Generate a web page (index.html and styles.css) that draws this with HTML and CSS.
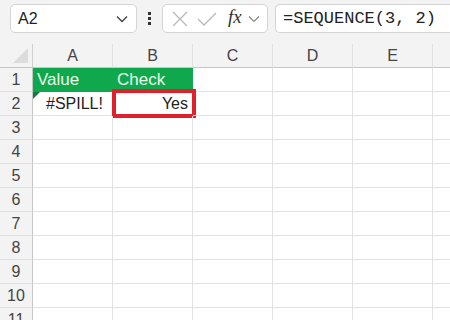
FILE: index.html
```html
<!DOCTYPE html>
<html lang="en">
<head>
    <meta charset="UTF-8">
    <title>Sheet</title>
    <link rel="stylesheet" href="styles.css">
</head>
<body>
    <div class="toolbar">
        <div class="namebox">
            <span>A2</span>
            <svg class="chev" width="12" height="8" viewBox="0 0 12 8"><path d="M1 1.5 L6 6.5 L11 1.5" fill="none" stroke="#444" stroke-width="1.4"/></svg>
        </div>
        <div class="dots"><i></i><i></i><i></i></div>
        <div class="fnbox">
            <svg width="20" height="20" viewBox="0 0 20 20"><path d="M3 3 L17 17 M17 3 L3 17" stroke="#b8b8b8" stroke-width="1.3"/></svg>
            <svg width="22" height="20" viewBox="0 0 22 20"><path d="M2 10 L8 16 L20 4" fill="none" stroke="#b8b8b8" stroke-width="1.3"/></svg>
            <span class="fx">fx</span>
            <svg class="chev" width="12" height="8" viewBox="0 0 12 8"><path d="M1 1.5 L6 6.5 L11 1.5" fill="none" stroke="#888" stroke-width="1.2"/></svg>
        </div>
        <div class="formula">=SEQUENCE(3, 2)</div>
    </div>

    <div class="sheet">
        <div class="corner"><span class="tri"></span></div>
        <div class="colhead">A</div>
        <div class="colhead">B</div>
        <div class="colhead">C</div>
        <div class="colhead">D</div>
        <div class="colhead">E</div>
        <div class="colhead last"></div>

        <div class="rowhead">1</div>
        <div class="cell head">Value</div>
        <div class="cell head">Check</div>
        <div class="cell"></div><div class="cell"></div><div class="cell"></div><div class="cell last"></div>

        <div class="rowhead">2</div>
        <div class="cell err"><span class="flag"></span>#SPILL!</div>
        <div class="cell right mark">Yes<span class="box"></span></div>
        <div class="cell"></div><div class="cell"></div><div class="cell"></div><div class="cell last"></div>

        <div class="rowhead">3</div>
        <div class="cell"></div><div class="cell"></div><div class="cell"></div><div class="cell"></div><div class="cell"></div><div class="cell last"></div>
        <div class="rowhead">4</div>
        <div class="cell"></div><div class="cell"></div><div class="cell"></div><div class="cell"></div><div class="cell"></div><div class="cell last"></div>
        <div class="rowhead">5</div>
        <div class="cell"></div><div class="cell"></div><div class="cell"></div><div class="cell"></div><div class="cell"></div><div class="cell last"></div>
        <div class="rowhead">6</div>
        <div class="cell"></div><div class="cell"></div><div class="cell"></div><div class="cell"></div><div class="cell"></div><div class="cell last"></div>
        <div class="rowhead">7</div>
        <div class="cell"></div><div class="cell"></div><div class="cell"></div><div class="cell"></div><div class="cell"></div><div class="cell last"></div>
        <div class="rowhead">8</div>
        <div class="cell"></div><div class="cell"></div><div class="cell"></div><div class="cell"></div><div class="cell"></div><div class="cell last"></div>
        <div class="rowhead">9</div>
        <div class="cell"></div><div class="cell"></div><div class="cell"></div><div class="cell"></div><div class="cell"></div><div class="cell last"></div>
        <div class="rowhead">10</div>
        <div class="cell"></div><div class="cell"></div><div class="cell"></div><div class="cell"></div><div class="cell"></div><div class="cell last"></div>
        <div class="rowhead">11</div>
        <div class="cell"></div><div class="cell"></div><div class="cell"></div><div class="cell"></div><div class="cell"></div><div class="cell last"></div>
    </div>
</body>
</html>
```

FILE: styles.css
```css
body {
    margin: 0;
    background: #fff;
    font-family: 'Liberation Sans', Arial, sans-serif;
    overflow: hidden;
}
.toolbar {
    display: flex;
    align-items: center;
    height: 44px;
    padding: 0 0 0 10px;
    background: #f3f3f3;
    box-sizing: border-box;
}
.namebox {
    width: 127px;
    height: 29px;
    box-sizing: border-box;
    background: #fff;
    border: 1px solid #d4d4d4;
    border-radius: 5px;
    display: flex;
    align-items: center;
    justify-content: space-between;
    padding: 0 8px 0 7px;
    font-size: 16px;
    color: #222;
    margin-top: -7px;
}
.dots {
    width: 25px;
    display: flex;
    flex-direction: column;
    align-items: center;
    gap: 2px;
    margin-top: -7px;
}
.dots i {
    display: block;
    width: 3px;
    height: 3px;
    background: #333;
}
.fnbox {
    width: 106px;
    height: 29px;
    box-sizing: border-box;
    background: #fff;
    border: 1px solid #d4d4d4;
    border-radius: 5px;
    display: flex;
    align-items: center;
    padding: 0 5px 0 7px;
    gap: 6px;
    margin-top: -7px;
}
.fx {
    font-family: 'Liberation Serif', serif;
    font-style: italic;
    font-size: 19px;
    color: #333;
    margin-left: 4px;
    margin-top: -3px;
}
.formula {
    flex: 1;
    height: 29px;
    box-sizing: border-box;
    margin-left: 7px;
    background: #fff;
    border: 1px solid #d4d4d4;
    border-right: none;
    border-radius: 5px 0 0 5px;
    font-family: 'Liberation Mono', 'DejaVu Sans Mono', monospace;
    font-size: 17px;
    line-height: 27px;
    padding-left: 7px;
    color: #222;
    margin-top: -7px;
}
.sheet {
    display: grid;
    grid-template-columns: 33px repeat(5, 80px) 1fr;
    grid-auto-rows: 24px;
    font-size: 16px;
    color: #222;
}
.corner {
    background: #f3f3f3;
    border-right: 1px solid #d0d0d0;
    border-bottom: 1px solid #c6c6c6;
    position: relative;
}
.tri {
    position: absolute;
    right: 4px;
    bottom: 4px;
    width: 0;
    height: 0;
    border-left: 15px solid transparent;
    border-bottom: 15px solid #dcdcdc;
}
.colhead {
    background: #f3f3f3;
    border-right: 1px solid #e0e0e0;
    border-bottom: 1px solid #c6c6c6;
    text-align: center;
    line-height: 24px;
    color: #444;
}
.rowhead {
    background: #f3f3f3;
    border-right: 1px solid #c6c6c6;
    border-bottom: 1px solid #e0e0e0;
    text-align: center;
    line-height: 24px;
    color: #444;
}
.cell {
    border-right: 1px solid #e2e2e2;
    border-bottom: 1px solid #e2e2e2;
    line-height: 23px;
    padding: 0 4px;
    position: relative;
    white-space: nowrap;
}
.cell.last, .colhead.last {
    border-right: none;
}
.cell.head {
    background: #0fa84d;
    color: #eafaea;
    border-color: #0fa84d;
    font-size: 17px;
}
.cell.err {
    padding-left: 13px;
}
.flag {
    position: absolute;
    left: 0;
    top: 0;
    width: 0;
    height: 0;
    border-top: 7px solid #107c41;
    border-right: 7px solid transparent;
}
.cell.right {
    text-align: right;
}
.box {
    position: absolute;
    left: -1px;
    top: -3px;
    width: 84px;
    height: 29px;
    border: 4px solid #e0202c;
    box-sizing: border-box;
}
```
